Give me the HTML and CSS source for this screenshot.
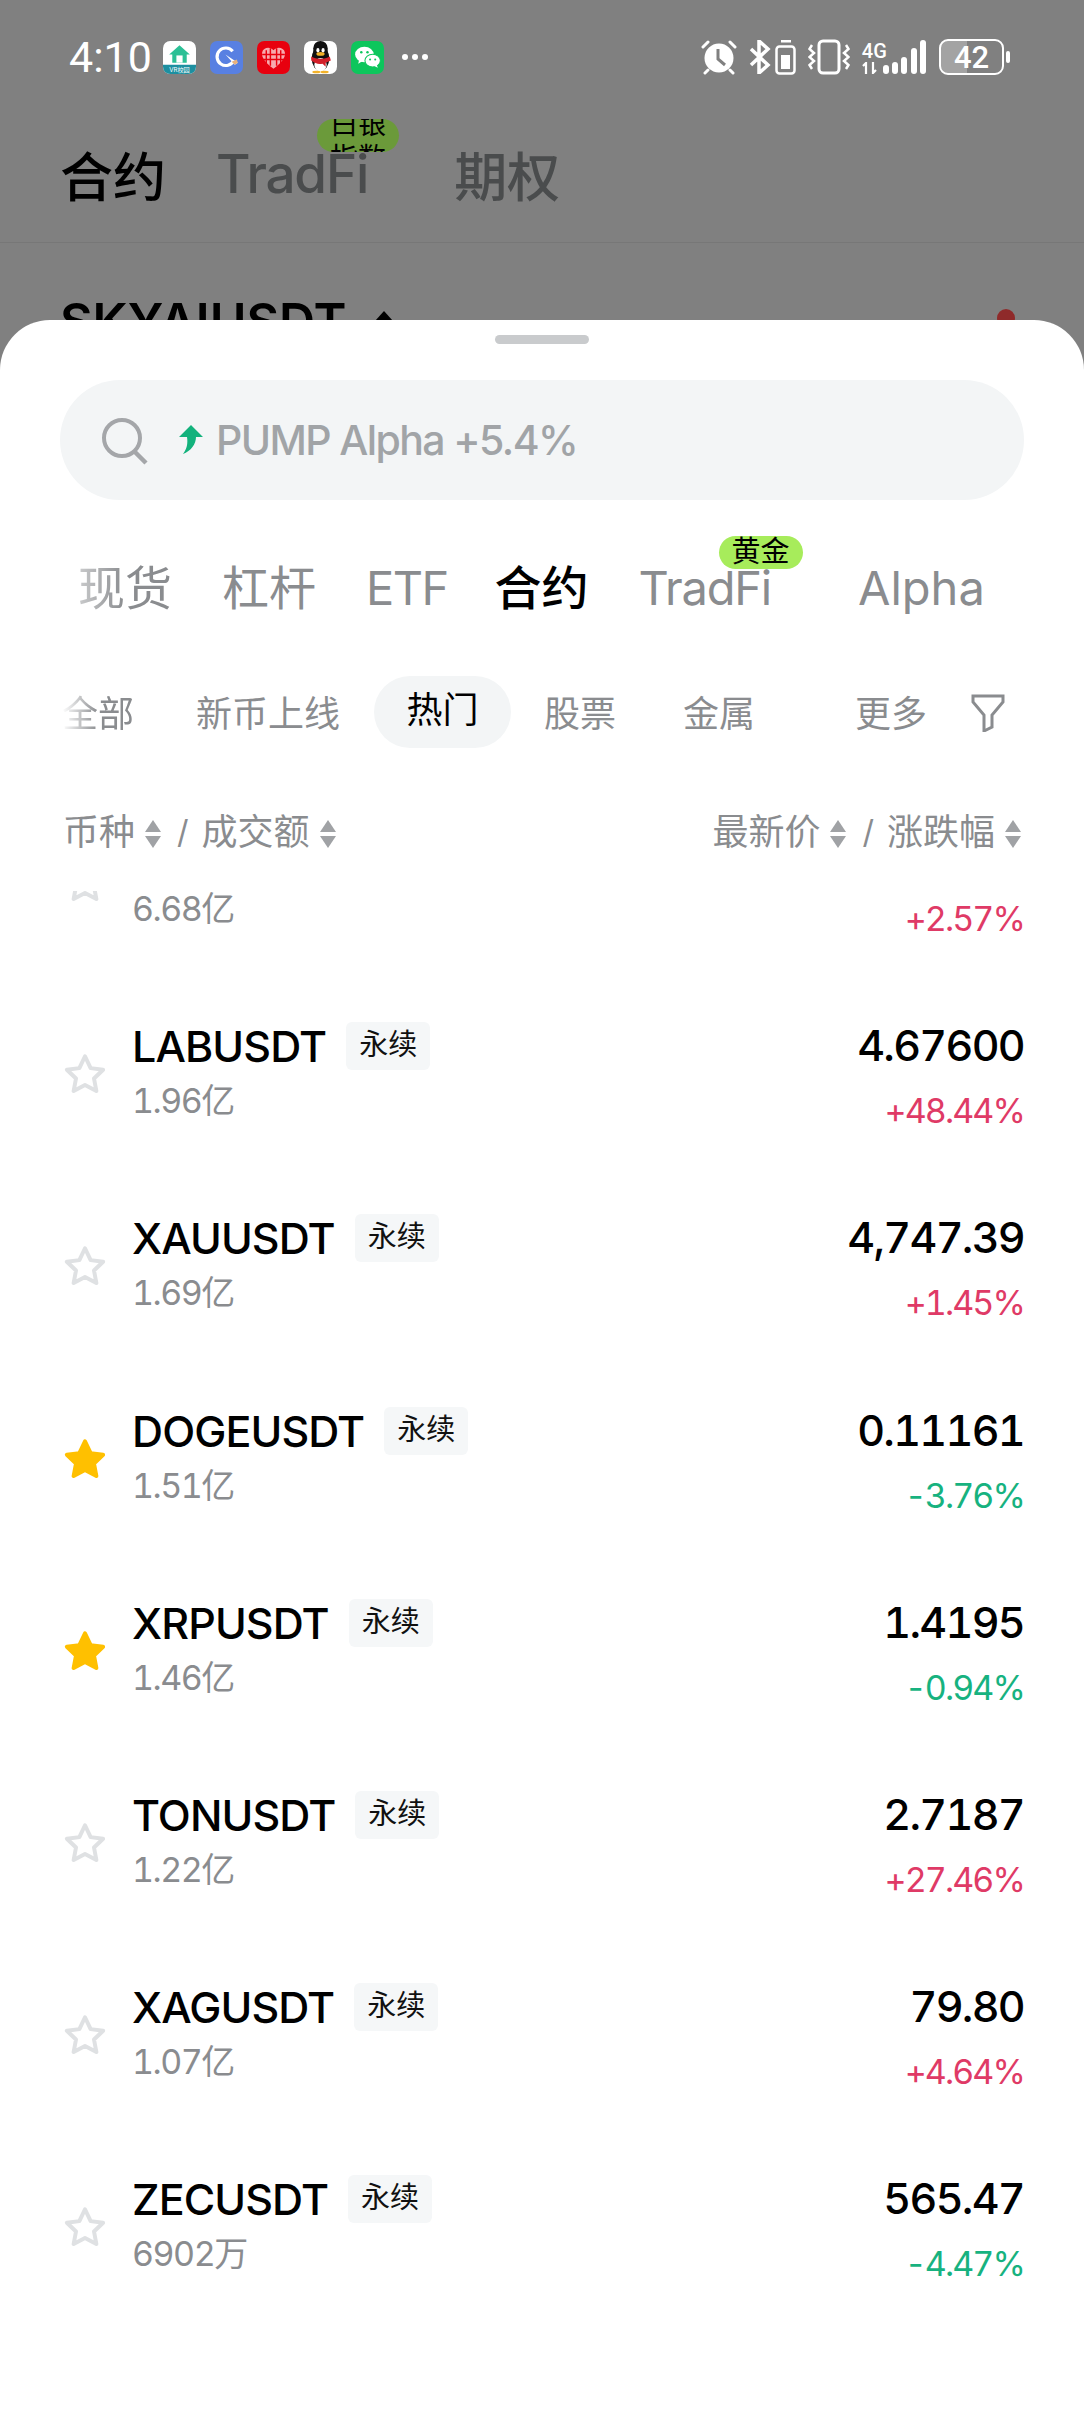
FILE: index.html
```html
<!DOCTYPE html>
<html lang="zh-CN">
<head>
    <meta charset="UTF-8">
    <meta name="viewport" content="width=device-width, initial-scale=1.0">
    <title>合约</title>
    <link rel="stylesheet" href="styles.css">
</head>
<body>
    <div class="behind">
        <div class="statusbar">
            <span class="time">4:10</span>
            <div class="apps">
                <svg class="app" viewBox="0 0 32 32"><rect width="32" height="32" rx="7" fill="#fff"/><path d="M0 23h32v2a7 7 0 0 1-7 7H7a7 7 0 0 1-7-7z" fill="#1d8fa0"/><path d="M16 4 6 13h3v8h14v-8h3z" fill="#2cc096"/><rect x="13" y="14" width="6" height="7" fill="#fff"/><text x="16" y="30" class="app-label">VR校园</text></svg>
                <svg class="app" viewBox="0 0 32 32"><rect width="32" height="32" rx="7" fill="#5880e2"/><path d="M22 10a8.500 8.500 0 1 0 1 9" fill="none" stroke="#fff" stroke-width="3"/><path d="m15 13 9 10 3-2z" fill="#fff"/><path d="m21 20 3 3 3-2-1-3z" fill="#e9b27c"/></svg>
                <svg class="app" viewBox="0 0 32 32"><rect width="32" height="32" rx="7" fill="#e8000f"/><path d="M16 27C8 21 4 16 5 11c1-5 8-6 11-2 3-4 10-3 11 2 1 5-3 10-11 16z" fill="#f7a9ae"/><path d="M9 9v13M13 7v17M19 7v17M23 9v13M5 13h22M6 18h20" stroke="#e8000f" stroke-width="1.4"/></svg>
                <svg class="app" viewBox="0 0 32 32"><rect width="32" height="32" rx="7" fill="#fff"/><ellipse cx="16" cy="17" rx="8.500" ry="12" fill="#111"/><path d="M9 7a7 7 0 0 1 14 0v9H9z" fill="#111"/><ellipse cx="16" cy="23" rx="6" ry="6.500" fill="#fff"/><ellipse cx="13.500" cy="9" rx="1.500" ry="2.200" fill="#fff"/><ellipse cx="18.500" cy="9" rx="1.500" ry="2.200" fill="#fff"/><path d="M7 15c5 3 13 3 18 0l1 4-5 2v4l-3-3c-4 1-7 0-11-3z" fill="#d2202a"/><ellipse cx="16" cy="12.500" rx="4" ry="1.800" fill="#f3b229"/><ellipse cx="12" cy="30" rx="4" ry="1.200" fill="#f3b229"/><ellipse cx="20" cy="30" rx="4" ry="1.200" fill="#f3b229"/></svg>
                <svg class="app" viewBox="0 0 32 32"><rect width="32" height="32" rx="7" fill="#0dc65c"/><ellipse cx="13" cy="13" rx="9" ry="7.500" fill="#fff"/><path d="m8 18-1 4 5-3z" fill="#fff"/><ellipse cx="21" cy="19" rx="7.500" ry="6.200" stroke="#0dc65c" fill="#fff"/><path d="m25 23 1 3-4-2z" fill="#fff"/><circle cx="10" cy="11" r="1.200" fill="#0dc65c"/><circle cx="16" cy="11" r="1.200" fill="#0dc65c"/><circle cx="18.500" cy="18" r="1" fill="#0dc65c"/><circle cx="23.500" cy="18" r="1" fill="#0dc65c"/></svg>
                <span class="more-dots"><i></i><i></i><i></i></span>
            </div>
            <div class="sysicons">
                <svg width="36" height="36" viewBox="0 0 36 36"><circle cx="18" cy="19" r="14.500" fill="#fff"/><path d="M17 10v10l7 6" fill="none" stroke="#808080" stroke-width="3"/><path d="M2 8 7 3M34 8l-5-5M7 31l-3 3M29 31l3 3" stroke="#fff" stroke-width="3" stroke-linecap="round"/></svg>
                <svg class="bt" width="22" height="34" viewBox="0 0 22 34"><path d="M2 9 19 25 10 33V1l9 8L2 25" fill="none" stroke="#fff" stroke-width="3.500"/></svg>
                <svg class="saver" width="21" height="36" viewBox="0 0 21 36"><rect x="6" y="1" width="10" height="2.500" fill="#fff"/><rect x="1.500" y="7.500" width="18" height="27" rx="3" fill="none" stroke="#fff" stroke-width="2.500"/><rect x="6" y="16" width="9" height="14" fill="#fff"/></svg>
                <svg class="vib" width="42" height="36" viewBox="0 0 42 36"><rect x="11" y="2" width="20" height="32" rx="4" fill="none" stroke="#fff" stroke-width="3"/><path d="M4 6 1.500 10 6 14 1.500 18 6 22 1.500 26 4 30M38 6l2.500 4L36 14l4.500 4L36 22l4.500 4-2.500 4" fill="none" stroke="#fff" stroke-width="2.500"/></svg>
                <div class="net">
                    <span class="net-type">4G</span>
                    <svg width="16" height="12" viewBox="0 0 16 12"><path d="M4 12V1L1 4M11 0v11l3-3" fill="none" stroke="#fff" stroke-width="2.200"/></svg>
                </div>
                <div class="signal"><i class="s1"></i><i class="s2"></i><i class="s3"></i><i class="s4"></i><i class="s5"></i></div>
                <div class="battery"><span class="battery-num">42</span></div>
                <i class="battery-tip"></i>
            </div>
        </div>
        <div class="behind-tabs">
            <span class="behind-tab on">合约</span>
            <span class="behind-tab tradfi">TradFi<span class="behind-badge"><span class="behind-badge-text">白银指数</span></span></span>
            <span class="behind-tab">期权</span>
        </div>
        <div class="behind-sym">
            <span>SKYAIUSDT</span>
            <i class="sym-caret"></i>
            <i class="red-dot"></i>
        </div>
    </div>

    <div class="sheet">
        <div class="handle"></div>
        <div class="search">
            <svg class="search-icon" width="54" height="54" viewBox="0 0 54 54"><circle cx="23" cy="23" r="18" fill="none" stroke="#a4a6a9" stroke-width="4"/><path d="m36 37 11 11" stroke="#a4a6a9" stroke-width="4.500"/></svg>
            <svg class="trend" width="24" height="29" viewBox="0 0 24 29"><path d="M12 0 24 12h-7c0 7-5 14-13 17 4-5 5-11 4-17H0z" fill="#12b27c"/></svg>
            <span class="search-text">PUMP Alpha +5.4%</span>
        </div>

        <div class="tabs">
            <span class="tab first cjk">现货</span>
            <span class="tab cjk">杠杆</span>
            <span class="tab etf">ETF</span>
            <span class="tab on cjk">合约</span>
            <span class="tab tradfi">TradFi<span class="badge">黄金</span></span>
            <span class="tab alpha">Alpha</span>
        </div>

        <div class="subtabs">
            <span class="subtab first">全部</span>
            <span class="subtab new">新币上线</span>
            <span class="subtab on">热门</span>
            <span class="subtab stock">股票</span>
            <span class="subtab metal">金属</span>
            <span class="subtab more">更多</span>
            <svg class="filter" width="34" height="38" viewBox="0 0 34 38"><path d="M2 2h30v6L21 21v12l-8 4V21L2 8z" fill="none" stroke="#8a8c8f" stroke-width="3"/></svg>
        </div>

        <div class="head">
            <div class="head-side">
                <span>币种</span><span class="sort"><i class="up"></i><i class="down"></i></span>
                <span class="slash">/</span>
                <span>成交额</span><span class="sort"><i class="up"></i><i class="down"></i></span>
            </div>
            <div class="head-side">
                <span>最新价</span><span class="sort"><i class="up"></i><i class="down"></i></span>
                <span class="slash">/</span>
                <span>涨跌幅</span><span class="sort"><i class="up"></i><i class="down"></i></span>
            </div>
        </div>

        <div class="list">
            <div class="list-inner">
                <div class="row">
                    <svg class="star" viewBox="0 0 40 40"><path d="M20 5 24.500 14.500l10 1.300-7.300 7 1.900 10L20 28l-9.100 4.800 1.900-10-7.300-7 10-1.300z"/></svg>
                    <div class="info"><div class="name-line"><span class="name">SKYAIUSDT</span><span class="tag">永续</span></div><div class="vol">6.68亿</div></div>
                    <div class="quote"><div class="price">0.50000</div><div class="pct rise">+2.57%</div></div>
                </div>
                <div class="row">
                    <svg class="star" viewBox="0 0 40 40"><path d="M20 5 24.500 14.500l10 1.300-7.300 7 1.900 10L20 28l-9.100 4.800 1.900-10-7.300-7 10-1.300z"/></svg>
                    <div class="info"><div class="name-line"><span class="name">LABUSDT</span><span class="tag">永续</span></div><div class="vol">1.96亿</div></div>
                    <div class="quote"><div class="price">4.67600</div><div class="pct rise">+48.44%</div></div>
                </div>
                <div class="row">
                    <svg class="star" viewBox="0 0 40 40"><path d="M20 5 24.500 14.500l10 1.300-7.300 7 1.900 10L20 28l-9.100 4.800 1.900-10-7.300-7 10-1.300z"/></svg>
                    <div class="info"><div class="name-line"><span class="name">XAUUSDT</span><span class="tag">永续</span></div><div class="vol">1.69亿</div></div>
                    <div class="quote"><div class="price">4,747.39</div><div class="pct rise">+1.45%</div></div>
                </div>
                <div class="row">
                    <svg class="star faved" viewBox="0 0 40 40"><path d="M20 5 24.500 14.500l10 1.300-7.300 7 1.900 10L20 28l-9.100 4.800 1.900-10-7.300-7 10-1.300z"/></svg>
                    <div class="info"><div class="name-line"><span class="name">DOGEUSDT</span><span class="tag">永续</span></div><div class="vol">1.51亿</div></div>
                    <div class="quote"><div class="price">0.11161</div><div class="pct fall">-3.76%</div></div>
                </div>
                <div class="row">
                    <svg class="star faved" viewBox="0 0 40 40"><path d="M20 5 24.500 14.500l10 1.300-7.300 7 1.900 10L20 28l-9.100 4.800 1.900-10-7.300-7 10-1.300z"/></svg>
                    <div class="info"><div class="name-line"><span class="name">XRPUSDT</span><span class="tag">永续</span></div><div class="vol">1.46亿</div></div>
                    <div class="quote"><div class="price">1.4195</div><div class="pct fall">-0.94%</div></div>
                </div>
                <div class="row">
                    <svg class="star" viewBox="0 0 40 40"><path d="M20 5 24.500 14.500l10 1.300-7.300 7 1.900 10L20 28l-9.100 4.800 1.900-10-7.300-7 10-1.300z"/></svg>
                    <div class="info"><div class="name-line"><span class="name">TONUSDT</span><span class="tag">永续</span></div><div class="vol">1.22亿</div></div>
                    <div class="quote"><div class="price">2.7187</div><div class="pct rise">+27.46%</div></div>
                </div>
                <div class="row">
                    <svg class="star" viewBox="0 0 40 40"><path d="M20 5 24.500 14.500l10 1.300-7.300 7 1.900 10L20 28l-9.100 4.800 1.900-10-7.300-7 10-1.300z"/></svg>
                    <div class="info"><div class="name-line"><span class="name">XAGUSDT</span><span class="tag">永续</span></div><div class="vol">1.07亿</div></div>
                    <div class="quote"><div class="price">79.80</div><div class="pct rise">+4.64%</div></div>
                </div>
                <div class="row">
                    <svg class="star" viewBox="0 0 40 40"><path d="M20 5 24.500 14.500l10 1.300-7.300 7 1.900 10L20 28l-9.100 4.800 1.900-10-7.300-7 10-1.300z"/></svg>
                    <div class="info"><div class="name-line"><span class="name">ZECUSDT</span><span class="tag">永续</span></div><div class="vol">6902万</div></div>
                    <div class="quote"><div class="price">565.47</div><div class="pct fall">-4.47%</div></div>
                </div>
            </div>
        </div>
    </div>
</body>
</html>
```

FILE: styles.css
```css
* {
    box-sizing: border-box;
}
html, body {
    margin: 0;
    padding: 0;
}
body {
    width: 1084px;
    height: 2412px;
    overflow: hidden;
    background-color: #808080;
    font-family: Inter, "Noto Sans CJK SC", sans-serif;
}
i {
    display: block;
}

/* dimmed page behind the sheet */
.behind {
    height: 320px;
    padding-top: 39px;
    overflow: hidden;
}
.statusbar {
    display: flex;
    align-items: center;
    height: 36px;
    padding-left: 69px;
    color: #fff;
}
.time {
    width: 94px;
    font-family: Roboto, sans-serif;
    font-size: 43px;
    line-height: 36px;
}
.apps {
    display: flex;
    align-items: center;
    gap: 14px;
}
.app {
    width: 33px;
    height: 33px;
}
.app-label {
    fill: #fff;
    font-size: 6px;
    text-anchor: middle;
}
.more-dots {
    display: flex;
    gap: 4px;
    margin-left: 4px;
}
.more-dots i {
    width: 6px;
    height: 6px;
    border-radius: 50%;
    background: #fff;
}
.sysicons {
    display: flex;
    align-items: center;
    margin-left: auto;
    padding-right: 74px;
}
.bt {
    margin-left: 12px;
}
.saver {
    margin-left: 4px;
}
.vib {
    margin-left: 12px;
}
.net {
    display: flex;
    flex-direction: column;
    width: 24px;
    margin-left: 12px;
}
.net-type {
    font-family: Roboto, sans-serif;
    font-size: 20px;
    line-height: 22px;
    font-weight: 500;
}
.signal {
    display: flex;
    align-items: flex-end;
    gap: 3.300px;
    height: 34px;
    margin-left: -3px;
}
.signal i {
    width: 6px;
    border-radius: 3px;
    background: #fff;
}
.s1 { height: 9px; }
.s2 { height: 12px; }
.s3 { height: 17px; }
.s4 { height: 26px; }
.s5 { height: 34px; }
.battery {
    display: flex;
    align-items: center;
    justify-content: center;
    width: 65px;
    height: 36px;
    margin-left: 13px;
    border: 2.500px solid #fff;
    border-radius: 9px;
    background: linear-gradient(90deg, #a3a3a3 42%, transparent 42%);
}
.battery-num {
    font-family: Roboto, sans-serif;
    font-size: 31px;
    font-weight: 500;
}
.battery-tip {
    width: 4px;
    height: 12px;
    margin-left: 2px;
    border-radius: 2px;
    background: #fff;
}

.behind-tabs {
    display: flex;
    align-items: center;
    height: 168px;
    padding: 30px 0 0 60px;
    border-bottom: 1px solid #777;
    font-size: 53px;
    font-weight: 500;
    color: #4a4c4d;
}
.behind-tab.on {
    color: #000;
}
.behind-tab.tradfi {
    position: relative;
    margin: 0 86px 0 50px;
    letter-spacing: -1.2px;
}
.behind-badge {
    position: absolute;
    left: 101px;
    top: -23px;
    width: 82px;
    height: 33px;
    overflow: hidden;
    padding: 0 13px;
    border-radius: 17px;
    background: #6b9a3a;
    color: #000;
    font-size: 28px;
    font-weight: 400;
    letter-spacing: 0;
}
.behind-badge-text {
    display: block;
    margin-top: -12px;
    line-height: 34px;
    text-align: center;
}
.behind-sym {
    position: relative;
    padding: 49px 0 0 60px;
    font-size: 50px;
    font-weight: 600;
    line-height: 58px;
    color: #000;
}
.sym-caret {
    position: absolute;
    left: 384px;
    top: 68px;
    border: 9px solid transparent;
    border-top: 0;
    border-bottom: 10px solid #000;
    margin-left: -9px;
}
.red-dot {
    position: absolute;
    left: 997px;
    top: 66px;
    width: 18px;
    height: 18px;
    border-radius: 50%;
    background: #8f2a2a;
}

/* bottom sheet */
.sheet {
    height: 2092px;
    border-radius: 50px 50px 0 0;
    background: #fff;
    overflow: hidden;
}
.handle {
    width: 94px;
    height: 9px;
    margin: 15px 0 0 495px;
    border-radius: 5px;
    background: #c9cbcd;
}
.search {
    display: flex;
    align-items: center;
    width: 964px;
    height: 120px;
    margin: 36px 0 0 60px;
    padding-left: 39px;
    border-radius: 60px;
    background: #f3f5f6;
}
.search-icon {
    flex: none;
    margin-top: 4px;
}
.trend {
    flex: none;
    margin-left: 26px;
    margin-top: -2px;
}
.search-text {
    margin-left: 13px;
    font-size: 41px;
    font-weight: 500;
    color: #a1a4a7;
    letter-spacing: -1.6px;
}

.tabs {
    display: flex;
    align-items: center;
    height: 70px;
    margin-top: 52px;
    padding-left: 78px;
    font-size: 47px;
    color: #8a8c8f;
}
.tab {
    margin-right: 50px;
    white-space: nowrap;
}
.tab.cjk {
    margin-bottom: 5px;
}
.tab.first {
    -webkit-mask-image: linear-gradient(90deg, rgba(0, 0, 0, 0.45), #000 50%);
    mask-image: linear-gradient(90deg, rgba(0, 0, 0, 0.45), #000 50%);
}
.tab.on {
    color: #000;
    font-weight: 500;
}
.tab.etf {
    margin-right: 47px;
    letter-spacing: -1.6px;
}
.tab.tradfi {
    position: relative;
    letter-spacing: -1.2px;
}
.tab.alpha {
    margin-left: 37px;
}
.badge {
    position: absolute;
    left: 80px;
    top: -23px;
    width: 84px;
    height: 33px;
    border-radius: 17px;
    background: #a7ec5b;
    color: #000;
    font-size: 29px;
    line-height: 32px;
    letter-spacing: 0;
    text-align: center;
}

.subtabs {
    display: flex;
    align-items: center;
    height: 72px;
    margin-top: 54px;
    padding-left: 62px;
    font-size: 36px;
    color: #8a8c8f;
}
.subtab {
    margin-bottom: 3px;
    white-space: nowrap;
}
.subtab.first {
    -webkit-mask-image: linear-gradient(90deg, transparent, #000 50%);
    mask-image: linear-gradient(90deg, transparent, #000 50%);
}
.subtab.new {
    margin-left: 62px;
}
.subtab.on {
    width: 137px;
    height: 72px;
    margin-bottom: 0;
    margin-left: 34px;
    border-radius: 36px;
    background: #f3f5f6;
    color: #000;
    line-height: 68px;
    text-align: center;
}
.subtab.stock {
    margin-left: 33px;
}
.subtab.metal {
    margin-left: 67px;
}
.subtab.more {
    margin-left: 100px;
}
.filter {
    margin-left: 44px;
    margin-top: 2px;
}

.head {
    display: flex;
    justify-content: space-between;
    height: 40px;
    margin-top: 64px;
    padding: 0 63px;
    font-size: 36px;
    line-height: 40px;
    color: #8a8c8f;
}
.head-side {
    display: flex;
    align-items: center;
}
.sort {
    display: flex;
    flex-direction: column;
    gap: 4px;
    margin-left: 10px;
    margin-top: 4px;
}
.sort .up, .sort .down {
    width: 0;
    height: 0;
    border: 8.500px solid transparent;
}
.sort .up {
    border-top: 0;
    border-bottom: 12px solid #a0a2a5;
}
.sort .down {
    border-bottom: 0;
    border-top: 12px solid #a0a2a5;
}
.slash {
    margin: 0 13px 0 16px;
    font-size: 32px;
}

.list {
    height: 1509px;
    margin-top: 39px;
    overflow: hidden;
}
.list-inner {
    margin-top: -106px;
}
.row {
    display: flex;
    align-items: center;
    height: 192.2px;
    padding: 0 60px;
}
.star {
    flex: none;
    width: 50px;
    height: 50px;
    margin-top: 4px;
    fill: none;
    stroke: #dfe1e3;
    stroke-width: 3.200;
    stroke-linejoin: round;
}
.star.faved {
    fill: #ffc000;
    stroke: #ffc000;
}
.info {
    flex: 1;
    margin-left: 22px;
    margin-top: -4px;
}
.name-line {
    display: flex;
    align-items: center;
    height: 50px;
}
.name {
    font-size: 43px;
    font-weight: 450;
    color: #000;
    letter-spacing: -0.9px;
}
.tag {
    width: 84px;
    height: 48px;
    margin-left: 20px;
    border-radius: 6px;
    background: #f5f7f8;
    color: #111;
    font-size: 29px;
    line-height: 46px;
    text-align: center;
}
.vol {
    margin-top: 10px;
    font-size: 34px;
    line-height: 40px;
    color: #8a8c8f;
    letter-spacing: -1.5px;
    font-variant-numeric: tabular-nums;
}
.quote {
    margin-top: 5px;
    text-align: right;
}
.price {
    font-size: 43px;
    font-weight: 450;
    line-height: 50px;
    color: #000;
    letter-spacing: -1.7px;
    font-variant-numeric: tabular-nums;
}
.pct {
    margin-top: 21px;
    font-size: 34px;
    line-height: 40px;
    letter-spacing: -1.9px;
    font-variant-numeric: tabular-nums;
}
.rise {
    color: #df3a66;
}
.fall {
    color: #17b27f;
}
```
